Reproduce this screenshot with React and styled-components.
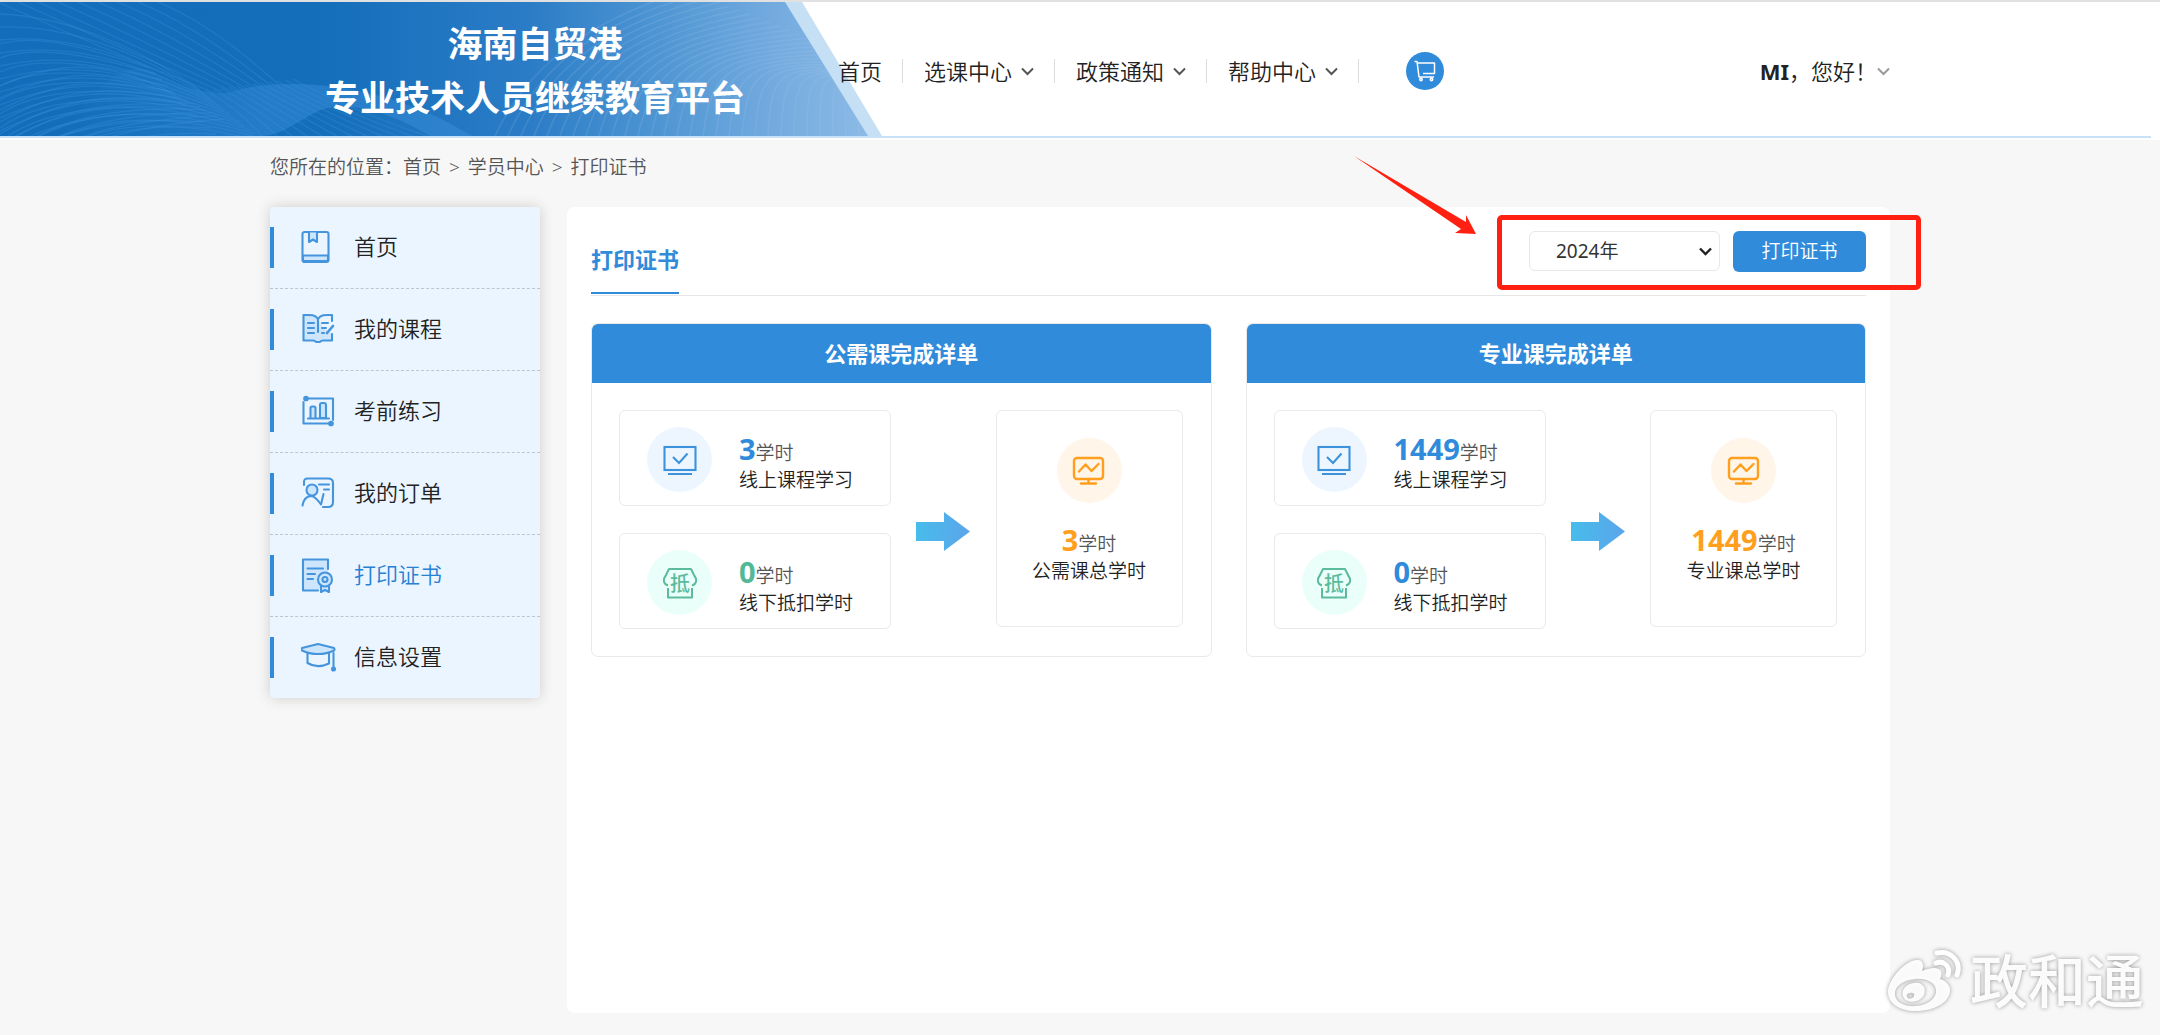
import React from 'react'
import styled, { createGlobalStyle } from 'styled-components'

const GlobalStyle = createGlobalStyle`
    * {
        box-sizing: border-box;
    }
    body {
        margin: 0;
        background-color: #f7f7f7;
        color: #222;
        font-family: "Noto Sans", "Noto Sans CJK SC", sans-serif;
        font-size: 19px;
        font-weight: 350;
    }
    h1, h2, h3, p, ul, ol {
        margin: 0;
        padding: 0;
        list-style: none;
    }
    a {
        color: inherit;
        text-decoration: none;
    }
    button, select {
        font-family: inherit;
        font-weight: inherit;
    }
`;

const Page = styled.div`
    min-height: 100vh;
    display: flex;
    flex-direction: column;
    padding-bottom: 22px;
`;

const Header = styled.header`
    position: relative;
    height: 140px;
    border-top: 2px solid #e1e1e1;
    background-color: white;
`;

const Banner = styled.svg`
    position: absolute;
    left: 0;
    top: 0;
    width: 882px;
    height: 134px;
`;

const HeaderInner = styled.div`
    position: relative;
    width: 75%;
    height: 134px;
    margin: 0 auto;
    padding-top: 4px;
    display: flex;
    align-items: center;
`;

const HeaderLine = styled.div`
    height: 2px;
    margin-right: 9px;
    background-color: #c9e1f6;
`;

const Brand = styled.h1`
    flex: 0 0 530px;
    margin-right: 38px;
    color: white;
    font-size: 35px;
    font-weight: 700;
    line-height: 54px;
    text-align: center;
`;

const Nav = styled.ul`
    display: flex;
    align-items: center;
`;

const NavItem = styled.li`
    display: flex;
    align-items: center;
    height: 24px;
    padding-right: 20px;
    margin-right: 21px;
    border-right: 1px solid #dcdcdc;
    font-size: 22px;
    line-height: 24px;

    a {
        display: flex;
        align-items: center;
        gap: 9px;
        white-space: nowrap;
    }
`;

const Cart = styled.a`
    display: flex;
    align-items: center;
    justify-content: center;
    width: 38px;
    height: 38px;
    margin-left: 26px;
    border-radius: 50%;
    background-color: #308bda;
`;

const User = styled.a`
    display: flex;
    align-items: center;
    margin-left: auto;
    font-size: 22px;
    line-height: 24px;
    white-space: nowrap;

    b {
        font-weight: 700;
    }
`;

const Crumbs = styled.nav`
    width: 75%;
    margin: 0 auto;
    padding: 13px 0 26px;
    color: #555;
    font-size: 19px;
    line-height: 28px;

    i {
        margin: 0 3px;
        font-style: normal;
    }
`;

const Body = styled.div`
    flex: 1;
    width: 75%;
    margin: 0 auto;
    display: flex;
    align-items: stretch;
    gap: 27px;
`;

const Sidebar = styled.ul`
    flex: 0 0 270px;
    align-self: flex-start;
    border-radius: 4px;
    background-color: #eaf5ff;
    box-shadow: 0 0 14px rgba(60, 40, 30, 0.2);
`;

const SideItem = styled.li`
    border-bottom: 1px dashed #bcc6cf;

    &:last-child {
        border-bottom: none;
    }

    a {
        display: flex;
        align-items: center;
        height: 81px;
        color: ${props => (props.$active ? '#2680d4' : '#222')};
        font-size: 22px;
        line-height: 30px;
    }

    a::before {
        content: "";
        width: 4px;
        height: 41px;
        margin-right: 27px;
        background-color: #308bda;
    }

    svg {
        margin-right: 18px;
    }

    span {
        padding-bottom: 4px;
    }
`;

const Main = styled.main`
    flex: 1;
    min-width: 0;
    padding: 24px;
    border-radius: 8px;
    background-color: white;
`;

const Head = styled.div`
    display: flex;
    justify-content: space-between;
    height: 65px;
    margin-bottom: 27px;
    border-bottom: 1px solid #e6e6e6;
`;

const Title = styled.h2`
    height: 63px;
    padding: 13px 0 18px;
    border-bottom: 2px solid #308bda;
    color: #308bda;
    font-size: 22px;
    font-weight: 700;
    line-height: 30px;
`;

const Tools = styled.div`
    position: relative;
    display: flex;
    gap: 13px;
    height: 41px;
`;

const SelectBox = styled.label`
    position: relative;
    width: 191px;

    svg {
        position: absolute;
        right: 8px;
        top: 16px;
        pointer-events: none;
    }
`;

const Select = styled.select`
    appearance: none;
    width: 100%;
    height: 40px;
    padding: 0 26px;
    border: 1px solid #e8e8e8;
    border-radius: 6px;
    background-color: white;
    color: #333;
    font-size: 19px;
    font-weight: 400;
`;

const PrintButton = styled.button`
    width: 133px;
    height: 41px;
    padding: 0 0 3px;
    border: none;
    border-radius: 6px;
    background-color: #308bda;
    color: white;
    font-size: 19px;
    cursor: pointer;
`;

const Highlight = styled.div`
    position: absolute;
    top: -16px;
    right: -55px;
    bottom: -18px;
    left: -32px;
    border: 5px solid #ff2011;
    border-radius: 5px;
    pointer-events: none;
`;

const Pointer = styled.svg`
    position: absolute;
    left: -175px;
    top: -75px;
    pointer-events: none;
`;

const Cards = styled.div`
    display: grid;
    grid-template-columns: 1fr 1fr;
    gap: 34px;
`;

const Card = styled.section`
    border: 1px solid #e9e9e9;
    border-radius: 7px;
    overflow: hidden;
`;

const CardTitle = styled.h3`
    background-color: #308bda;
    color: white;
    font-size: 22px;
    font-weight: 700;
    line-height: 59px;
    text-align: center;
`;

const CardBody = styled.div`
    display: flex;
    align-items: flex-start;
    justify-content: space-between;
    padding: 27px 28px 27px 27px;
`;

const Column = styled.div`
    display: grid;
    gap: 27px;
`;

const Hours = styled.div`
    display: flex;
    width: 272px;
    height: 96px;
    padding: 16px 0 0 27px;
    border: 1px solid #e9e9e9;
    border-radius: 6px;
`;

const Total = styled.div`
    display: flex;
    flex-direction: column;
    align-items: center;
    width: 187px;
    height: 217px;
    padding-top: 27px;
    border: 1px solid #e9e9e9;
    border-radius: 6px;
    text-align: center;
`;

const Round = styled.div`
    display: flex;
    align-items: center;
    justify-content: center;
    width: 65px;
    height: 65px;
    border-radius: 50%;
    background-color: ${props => props.$bg};
`;

const Info = styled.div`
    padding: ${props => (props.$total ? '23px 0 0' : '8px 0 0 27px')};
    white-space: nowrap;
`;

const Amount = styled.p`
    color: #555;
    font-size: 19px;
    line-height: 27px;

    b {
        color: ${props => props.$color};
        font-size: 29px;
        font-weight: 700;
    }
`;

const Name = styled.p`
    font-size: 19px;
    line-height: 26px;
`;

const ArrowIcon = styled.svg`
    margin-top: 102px;
`;

const Watermark = styled.div`
    position: fixed;
    right: 16px;
    bottom: 16px;
    display: flex;
    align-items: center;
    gap: 8px;
    color: rgba(255, 255, 255, 0.95);
    font-size: 58px;
    font-weight: 500;
    line-height: 76px;
    text-shadow: 0 0 4px rgba(0, 0, 0, 0.4);
    pointer-events: none;

    svg {
        filter: drop-shadow(0 0 2px rgba(0, 0, 0, 0.4));
    }
`;

const range = n => Array.from({ length: n }, (_, i) => i)

function Chevron({ color = '#555', width = 2 }) {
  return (
    <svg width="13" height="9" viewBox="0 0 13 9" fill="none" stroke={color} strokeWidth={width}>
        <path d="M1 1.5 L6.5 7 L12 1.5" />
    </svg>
  )
}

function BannerArt() {
  return (
    <Banner viewBox="0 0 882 134" preserveAspectRatio="none" aria-hidden="true">
        <defs>
            <linearGradient id="sky" x1="0" y1="0" x2="882" y2="0" gradientUnits="userSpaceOnUse">
                <stop offset="0" stopColor="#136dbb" />
                <stop offset="0.36" stopColor="#146eba" />
                <stop offset="0.6" stopColor="#2b7cc6" />
                <stop offset="0.75" stopColor="#4f96d3" />
                <stop offset="0.88" stopColor="#74abdf" />
                <stop offset="1" stopColor="#8fbce6" />
            </linearGradient>
            <linearGradient id="mist" x1="0" y1="0" x2="1" y2="0">
                <stop offset="0" stopColor="#3086d2" stopOpacity="0" />
                <stop offset="0.5" stopColor="#3086d2" stopOpacity="0.6" />
                <stop offset="1" stopColor="#3b8fd9" stopOpacity="0.5" />
            </linearGradient>
            <clipPath id="slant">
                <path d="M0 0 H785 L868 134 H0 Z" />
            </clipPath>
        </defs>
        <path d="M780 0 H802 L882 134 H860 Z" fill="#c5dff5" />
        <g clipPath="url(#slant)">
            <rect width="882" height="134" fill="url(#sky)" />
            <path d="M60 134 C90 90 120 60 150 68 C180 84 200 92 225 91 C250 84 270 82 300 82 C350 84 410 96 472 134 H430 C390 110 350 98 320 108 C300 118 280 134 262 134 Z" fill="url(#mist)" />
            <g fill="none" stroke="#3b8fd9" strokeOpacity="0.36" strokeWidth="1.3">
                {range(9).map(i => (
                  <path key={i} d={`M${i * 20 - 2} 0 Q${100 + i * 14} ${46 - i * 3} ${215 + i * 8} ${91 - i}`} />
                ))}
                {range(14).map(i => (
                  <path key={i} d={`M0 ${12 + i * 13} C${60 + i} ${14 + i * 9} 130 ${40 + i * 5} ${200 + i * 5} ${88 + i * 4}`} />
                ))}
                {range(12).map(i => (
                  <path key={i} d={`M0 ${42 + i * 14} C40 ${30 + i * 11} ${100 + i * 3} ${50 + i * 7} ${150 + i * 6} ${66 + i * 6}`} />
                ))}
                {range(10).map(i => (
                  <path key={i} d={`M0 ${84 + i * 12} C50 ${62 + i * 10} 100 ${54 + i * 8} ${170 + i * 6} ${90 + i * 3}`} />
                ))}
                {range(12).map(i => (
                  <path key={i} d={`M${205 + i * 8} ${88 - i} Q${240 + i * 10} 108 ${262 + i * 15} 134`} />
                ))}
            </g>
            <g fill="none" stroke="#a6cdf0" strokeOpacity="0.16" strokeWidth="1.6">
                {range(30).map(i => (
                  <path key={i} d={`M${495 + i * 13} 134 C${520 + i * 12} ${80 - i} ${570 + i * 10} ${22 + i * 2} ${690 + i * 10} ${i * 4 - 12}`} />
                ))}
            </g>
        </g>
    </Banner>
  )
}

function MenuIcon({ name }) {
  const shapes = {
    home: (
      <>
        <path d="M2 25.5 H27 V31 H2 Z" fill="#cde6fd" />
        <rect x="1.5" y="2" width="26" height="30" rx="2" />
        <path d="M8 2.5 V12 L12 9.5 L16 12 V2.5" fill="#cde6fd" />
      </>
    ),
    course: (
      <>
        <path d="M17 7 C14 2 8 3 2.5 3 V28 H12 L17 30.5 L22 28 H31 V22 L22 16 Z" fill="#cde6fd" stroke="none" />
        <path d="M17 20 V7 C14 2 8 3 2.5 3 V28.5 H12 Q14 28.5 15 30 H19 Q20 28.5 22 28.5 H31 V22" />
        <path d="M17 7 C20 2 26 3 31 3 V9" />
        <path d="M7 11 H13 M7 16 H13 M7 21 H13 M21 11 H27 M21 16 H25 M21 21 H23" />
        <path d="M32 14 L26 21" strokeWidth="2.6" />
      </>
    ),
    practice: (
      <>
        <path d="M5 4.5 H32 V26 M30 29.5 H2.5 V8" />
        <circle cx="5" cy="4.5" r="1.8" fill="#4595dd" />
        <circle cx="30" cy="29.5" r="1.8" fill="#4595dd" />
        <path d="M9.5 24 V14 Q9.5 12.5 11 12.5 H13 Q14.5 12.5 14.5 14 V24 M19 24 V11 Q19 9 21 9 H23 Q25 9 25 11 V24 Z" fill="#cde6fd" />
        <path d="M7 24.5 H28" />
      </>
    ),
    order: (
      <>
        <path d="M3 9 V6 Q3 2.5 6.5 2.5 H27 Q32 2.5 32 7 V26 Q32 31 27 31 H22" />
        <circle cx="11" cy="14" r="5.5" fill="#cde6fd" />
        <path d="M1.5 29.5 Q3 20.5 10 20 Q14 20 20 28.5 L22.5 18" />
        <path d="M18 8.5 H28 M23 13.5 H28" />
      </>
    ),
    print: (
      <>
        <path d="M2 2 H27 V14 L18 32 H2 Z" fill="#cde6fd" stroke="none" />
        <path d="M27 11 V1.5 H2 V32.5 H17" />
        <path d="M6.5 10.5 H22 M6.5 16 H14 M6.5 21 H12" />
        <path d="M20 28 V34 L24 32 L28 34 V28" fill="#cde6fd" />
        <circle cx="24" cy="21.5" r="7" fill="#cde6fd" />
        <circle cx="24" cy="21.5" r="2.5" />
      </>
    ),
    info: (
      <>
        <path d="M17 4 L33 8 Q34 9.5 33 10.5 Q26 14 17 14 Q8 14 1 10.5 Q0 9.5 1 8 Z" fill="#cde6fd" />
        <path d="M6.5 13 V23 Q16 29 28 23.5 V13" />
        <path d="M32.5 13 V28" />
        <circle cx="32.5" cy="29" r="1.5" fill="#4595dd" />
      </>
    ),
  }
  return (
    <svg width="35" height="35" viewBox="0 0 35 35" fill="none" stroke="#4595dd" strokeWidth="2.1" strokeLinejoin="round" strokeLinecap="round">
        {shapes[name]}
    </svg>
  )
}

function OnlineIcon() {
  return (
    <svg width="34" height="32" viewBox="0 0 34 32" fill="none" stroke="#3d92dc" strokeWidth="2.1">
        <rect x="1.5" y="3" width="31" height="23" />
        <path d="M5 30 H29" />
        <path d="M10 13 L16 19 L24.5 9.5" />
    </svg>
  )
}

function OfflineIcon() {
  return (
    <svg width="34" height="32" viewBox="0 0 34 32" fill="none" stroke="#5bbb9c" strokeWidth="2" strokeLinejoin="round">
        <path d="M5 18.5 C0 17 0 12 2.5 9 L6 2 H28 L31.5 9 C34 12 34 17 29 18.5" />
        <path d="M5 21 V30.5 H29 V21" />
        <text x="17" y="24" fill="#5bbb9c" stroke="none" fontSize="20" fontWeight="500" textAnchor="middle">抵</text>
    </svg>
  )
}

function TotalIcon() {
  return (
    <svg width="34" height="32" viewBox="0 0 34 32" fill="none" stroke="#ff9f1d" strokeWidth="2.4" strokeLinecap="round" strokeLinejoin="round">
        <rect x="2" y="3" width="29" height="21" rx="3" />
        <path d="M7 16.5 L13.5 9.5 L19.5 16 L26.5 9" />
        <path d="M16.5 24 V28 M9 28.5 H24" />
    </svg>
  )
}

function CartIcon() {
  return (
    <svg width="22" height="22" viewBox="0 0 22 22" fill="none" stroke="white" strokeWidth="1.5" strokeLinejoin="round">
        <path d="M0.5 1.5 H3 L5 17 H20" />
        <path d="M4 3 H20.5 V13.5 H9" />
        <circle cx="7" cy="19.5" r="1.2" />
        <circle cx="17.5" cy="19.5" r="1.2" />
    </svg>
  )
}

function BigArrow() {
  return (
    <ArrowIcon width="54" height="39" viewBox="0 0 54 39">
        <defs>
            <linearGradient id="arrow" x1="0" y1="0" x2="1" y2="0">
                <stop offset="0" stopColor="#47bceb" />
                <stop offset="1" stopColor="#5ba5ea" />
            </linearGradient>
        </defs>
        <path d="M0 10 H28 V0 L54 19.5 L28 39 V29 H0 Z" fill="url(#arrow)" />
    </ArrowIcon>
  )
}

function WeiboLogo() {
  return (
    <svg width="76" height="64" viewBox="0 0 76 64" fill="none">
        <path fillRule="evenodd" fill="white" fillOpacity="0.95" d="M35 12 C38 15 37 20 36 22 C43 19 52 17 55 22 C56 25 55 28 54 30 C60 32 64 36 64 41 C64 53 49 62 30 62 C13 62 2 54 2 43 C2 30 20 11 31 11 C33 11 34 11 35 12 Z M29 30 C16 31 8 38 9 46 C10 54 19 58 31 57 C43 56 51 48 50 41 C49 33 40 29 29 30 Z" />
        <path fillRule="evenodd" fill="white" fillOpacity="0.95" d="M28 34 C20 35 15 41 17 47 C19 53 27 54 33 51 C38 48 40 43 38 38 C36 35 33 33 28 34 Z M24 44 C27 43 29 45 28 47 C27 50 22 51 21 48 C20 46 22 44 24 44 Z" />
        <path d="M50 14 C57 11 65 17 62 26" stroke="white" strokeWidth="5" strokeLinecap="round" />
        <path d="M51 4 C64 1 76 12 71 26" stroke="white" strokeWidth="5" strokeLinecap="round" />
    </svg>
  )
}

const navItems = ['选课中心', '政策通知', '帮助中心']

const menu = [
  { name: '首页', icon: 'home' },
  { name: '我的课程', icon: 'course' },
  { name: '考前练习', icon: 'practice' },
  { name: '我的订单', icon: 'order' },
  { name: '打印证书', icon: 'print', active: true },
  { name: '信息设置', icon: 'info' },
]

const cards = [
  { title: '公需课完成详单', online: 3, offline: 0, offlineColor: '#52b898', total: 3, totalName: '公需课总学时' },
  { title: '专业课完成详单', online: 1449, offline: 0, offlineColor: '#308bda', total: 1449, totalName: '专业课总学时' },
]

export default function App() {
  return (
    <Page>
        <GlobalStyle />
        <Header>
            <BannerArt />
            <HeaderInner>
                <Brand>海南自贸港<br />专业技术人员继续教育平台</Brand>
                <Nav>
                    <NavItem><a href="#home">首页</a></NavItem>
                    {navItems.map(item => (
                      <NavItem key={item}>
                          <a href="#nav">{item}<Chevron /></a>
                      </NavItem>
                    ))}
                </Nav>
                <Cart href="#cart" aria-label="购物车"><CartIcon /></Cart>
                <User href="#user">
                    <span><b>MI</b>，您好！</span>
                    <Chevron color="#999" />
                </User>
            </HeaderInner>
            <HeaderLine />
        </Header>
        <Crumbs>
            您所在的位置：<a href="#home">首页</a> <i>&gt;</i> <a href="#center">学员中心</a> <i>&gt;</i> <a href="#print">打印证书</a>
        </Crumbs>
        <Body>
            <Sidebar>
                {menu.map(item => (
                  <SideItem key={item.name} $active={item.active}>
                      <a href={'#' + item.icon}><MenuIcon name={item.icon} /><span>{item.name}</span></a>
                  </SideItem>
                ))}
            </Sidebar>
            <Main>
                <Head>
                    <Title>打印证书</Title>
                    <Tools>
                        <SelectBox>
                            <Select aria-label="年度" defaultValue="2024">
                                <option value="2024">2024年</option>
                            </Select>
                            <Chevron color="#222" width={2.4} />
                        </SelectBox>
                        <PrintButton type="button">打印证书</PrintButton>
                        <Highlight />
                        <Pointer width="124" height="80" viewBox="0 0 124 80">
                            <path d="M0 0 L112 66 L112 59 L122 78 L101 77 L107 73 Z" fill="#ff2011" />
                        </Pointer>
                    </Tools>
                </Head>
                <Cards>
                    {cards.map(card => (
                      <Card key={card.title}>
                          <CardTitle>{card.title}</CardTitle>
                          <CardBody>
                              <Column>
                                  <Hours>
                                      <Round $bg="#edf6ff"><OnlineIcon /></Round>
                                      <Info>
                                          <Amount $color="#308bda"><b>{card.online}</b>学时</Amount>
                                          <Name>线上课程学习</Name>
                                      </Info>
                                  </Hours>
                                  <Hours>
                                      <Round $bg="#eafffa"><OfflineIcon /></Round>
                                      <Info>
                                          <Amount $color={card.offlineColor}><b>{card.offline}</b>学时</Amount>
                                          <Name>线下抵扣学时</Name>
                                      </Info>
                                  </Hours>
                              </Column>
                              <BigArrow />
                              <Total>
                                  <Round $bg="#fff5e9"><TotalIcon /></Round>
                                  <Info $total>
                                      <Amount $color="#ff9f1d"><b>{card.total}</b>学时</Amount>
                                      <Name>{card.totalName}</Name>
                                  </Info>
                              </Total>
                          </CardBody>
                      </Card>
                    ))}
                </Cards>
            </Main>
        </Body>
        <Watermark>
            <WeiboLogo />
            <span>政和通</span>
        </Watermark>
    </Page>
  )
}
